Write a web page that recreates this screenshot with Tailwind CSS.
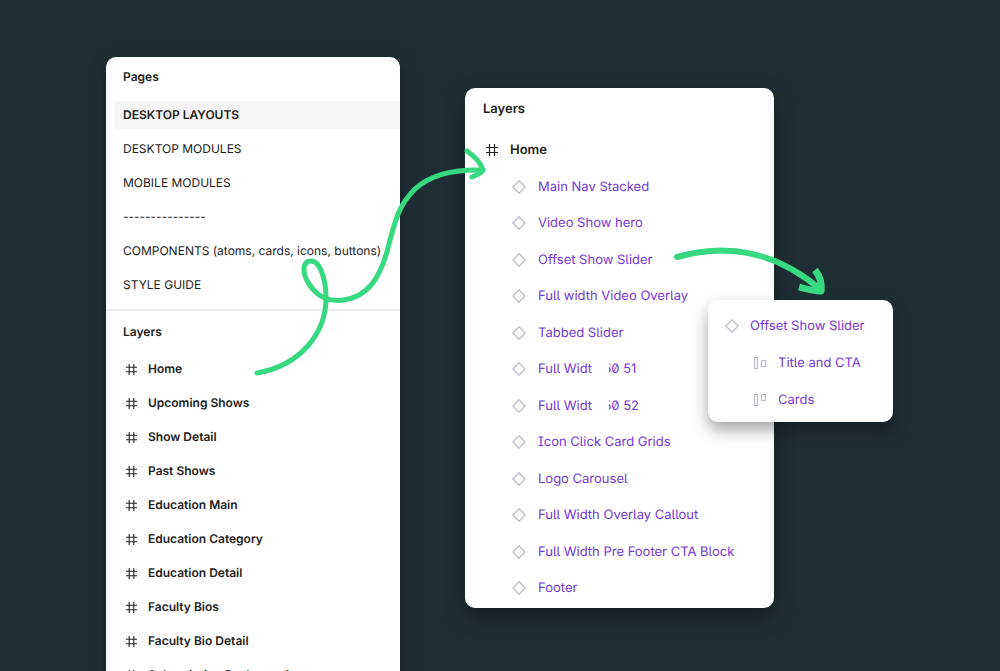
<!DOCTYPE html>
<html lang="en">
<head>
  <meta charset="UTF-8">
  <title>Pages and Layers</title>
  <meta name="viewport" content="width=device-width, initial-scale=1.0">
  <script src="https://cdn.jsdelivr.net/npm/@tailwindcss/browser@4"></script>
</head>
<body class="bg-[#1e2f34] font-['Inter',sans-serif] text-[#222] [text-rendering:geometricPrecision]">

  <!-- Shared icons -->
  <svg class="hidden">
    <symbol id="frame" viewBox="0 0 12 12">
      <path d="M3.5 0v12M8.5 0v12M0 3.5h12M0 8.5h12" fill="none" stroke="currentColor" stroke-width="1.2"/>
    </symbol>
    <symbol id="diamond" viewBox="0 0 14 14">
      <path d="M7 0.8L13.2 7L7 13.2L0.8 7Z" fill="none" stroke="currentColor" stroke-width="1.3"/>
    </symbol>
    <symbol id="align-center" viewBox="0 0 14 14">
      <path d="M1.5 1.5h3v11h-3zM8.5 4.5h4v6h-4z" fill="none" stroke="currentColor" stroke-width="1.2" stroke-linejoin="round"/>
    </symbol>
    <symbol id="align-top" viewBox="0 0 14 14">
      <path d="M1.5 1.5h3v11h-3zM8.5 1.5h4v6h-4z" fill="none" stroke="currentColor" stroke-width="1.2" stroke-linejoin="round"/>
    </symbol>
  </svg>

  <main class="flex h-screen items-start gap-[65px] overflow-hidden pl-[106px]">

    <!-- Pages panel -->
    <section class="relative z-10 mt-[57px] w-[294px] shrink-0 rounded-t-[10px] bg-white pb-4 text-xs shadow-[0_6px_16px_rgba(0,0,0,0.35)]">
      <h2 class="px-[17px] pt-3 pb-4 leading-4 font-semibold">Pages</h2>
      <ul class="pl-2">
        <li class="flex h-[28px] items-center rounded-l bg-[#f5f5f5] px-[9px] font-semibold">DESKTOP LAYOUTS</li>
        <li class="mt-[3px] flex h-[34px] items-center px-[9px]">DESKTOP MODULES</li>
        <li class="flex h-[34px] items-center px-[9px]">MOBILE MODULES</li>
        <li class="flex h-[34px] items-center px-[9px]">---------------</li>
        <li class="flex h-[34px] items-center px-[9px]">COMPONENTS (atoms, cards, icons, buttons)</li>
        <li class="flex h-[34px] items-center px-[9px]">STYLE GUIDE</li>
      </ul>

      <div class="mt-[7px] border-t-2 border-[#eeeeee] px-[17px] pt-[13px] font-semibold">
        <h2 class="leading-4">Layers</h2>
        <ul class="mt-3">
          <li class="flex h-[34px] items-center gap-[11px] pl-[3px]"><svg class="size-[11px]"><use href="#frame"/></svg>Home</li>
          <li class="flex h-[34px] items-center gap-[11px] pl-[3px]"><svg class="size-[11px]"><use href="#frame"/></svg>Upcoming Shows</li>
          <li class="flex h-[34px] items-center gap-[11px] pl-[3px]"><svg class="size-[11px]"><use href="#frame"/></svg>Show Detail</li>
          <li class="flex h-[34px] items-center gap-[11px] pl-[3px]"><svg class="size-[11px]"><use href="#frame"/></svg>Past Shows</li>
          <li class="flex h-[34px] items-center gap-[11px] pl-[3px]"><svg class="size-[11px]"><use href="#frame"/></svg>Education Main</li>
          <li class="flex h-[34px] items-center gap-[11px] pl-[3px]"><svg class="size-[11px]"><use href="#frame"/></svg>Education Category</li>
          <li class="flex h-[34px] items-center gap-[11px] pl-[3px]"><svg class="size-[11px]"><use href="#frame"/></svg>Education Detail</li>
          <li class="flex h-[34px] items-center gap-[11px] pl-[3px]"><svg class="size-[11px]"><use href="#frame"/></svg>Faculty Bios</li>
          <li class="flex h-[34px] items-center gap-[11px] pl-[3px]"><svg class="size-[11px]"><use href="#frame"/></svg>Faculty Bio Detail</li>
          <li class="flex h-[34px] items-center gap-[11px] pl-[3px]"><svg class="size-[11px]"><use href="#frame"/></svg>Subscription Packages 1</li>
        </ul>
      </div>

      <!-- Arrow from the Home page to its layers -->
      <svg class="absolute top-[83px] left-[144px] h-[250px] w-[250px] overflow-visible" viewBox="250 140 250 250" fill="none" stroke="#36d980" stroke-linecap="round" stroke-linejoin="round">
        <path d="M257 373C302 365 326 332 326 298C326 282 321 261 311 261C301 261 303 275 309 284C318 298 331 302 343 300C368 297 380 278 388 248C396 216 400 204 415 189C431 174 455 169 483 170" stroke-width="5"/>
        <path d="M467 151C474 156 481 163 483 170C482 173 477 175 472 177" stroke-width="5"/>
      </svg>
    </section>

    <!-- Layers panel -->
    <section class="relative mt-[88px] flex min-h-[520px] w-[309px] shrink-0 flex-col rounded-[10px] bg-white pb-[6px] text-[13px] leading-4 text-[#7338d8] shadow-[0_8px_20px_rgba(0,0,0,0.35)]">
      <h2 class="px-[18px] pt-[13px] font-semibold text-[#222]">Layers</h2>
      <h3 class="mt-[25px] flex items-center gap-3 px-[21px] font-semibold text-[#222]"><svg class="size-[12px]"><use href="#frame"/></svg>Home</h3>
      <ul class="mt-[21px] flex flex-1 flex-col justify-between px-[47px] pb-[6px] [font-feature-settings:'ss02']">
        <li class="flex items-center gap-3"><svg class="size-[14px] text-[#bdbacb]"><use href="#diamond"/></svg>Main Nav Stacked</li>
        <li class="flex items-center gap-3"><svg class="size-[14px] text-[#bdbacb]"><use href="#diamond"/></svg>Video Show hero</li>
        <li class="flex items-center gap-3"><svg class="size-[14px] text-[#bdbacb]"><use href="#diamond"/></svg>Offset Show Slider</li>
        <li class="flex items-center gap-3"><svg class="size-[14px] text-[#bdbacb]"><use href="#diamond"/></svg>Full width Video Overlay</li>
        <li class="flex items-center gap-3"><svg class="size-[14px] text-[#bdbacb]"><use href="#diamond"/></svg>Tabbed Slider</li>
        <li class="flex items-center gap-3"><svg class="size-[14px] text-[#bdbacb]"><use href="#diamond"/></svg><span class="relative">Full Width 50 51<i class="absolute inset-y-0 left-[54px] w-[17px] bg-white"></i></span></li>
        <li class="flex items-center gap-3"><svg class="size-[14px] text-[#bdbacb]"><use href="#diamond"/></svg><span class="relative">Full Width 50 52<i class="absolute inset-y-0 left-[54px] w-[17px] bg-white"></i></span></li>
        <li class="flex items-center gap-3"><svg class="size-[14px] text-[#bdbacb]"><use href="#diamond"/></svg>Icon Click Card Grids</li>
        <li class="flex items-center gap-3"><svg class="size-[14px] text-[#bdbacb]"><use href="#diamond"/></svg>Logo Carousel</li>
        <li class="flex items-center gap-3"><svg class="size-[14px] text-[#bdbacb]"><use href="#diamond"/></svg>Full Width Overlay Callout</li>
        <li class="flex items-center gap-3 whitespace-nowrap"><svg class="size-[14px] shrink-0 text-[#bdbacb]"><use href="#diamond"/></svg>Full Width Pre Footer CTA Block</li>
        <li class="flex items-center gap-3"><svg class="size-[14px] text-[#bdbacb]"><use href="#diamond"/></svg>Footer</li>
      </ul>

      <!-- Expanded component -->
      <div class="absolute top-[212px] left-[243px] w-[185px] rounded-[10px] bg-white pt-[18px] pb-[14px] pl-[17px] shadow-[0_8px_16px_rgba(0,0,0,0.35)] [font-feature-settings:'ss02']">
        <ul class="flex flex-col gap-[21px]">
          <li class="flex items-center gap-[11px]"><svg class="size-[14px] text-[#bdbacb]"><use href="#diamond"/></svg>Offset Show Slider</li>
          <li class="flex items-center gap-[11px] pl-[28px]"><svg class="size-[14px] text-[#bdbacb]"><use href="#align-center"/></svg>Title and CTA</li>
          <li class="flex items-center gap-[11px] pl-[28px]"><svg class="size-[14px] text-[#bdbacb]"><use href="#align-top"/></svg>Cards</li>
        </ul>
      </div>

      <!-- Arrow to the expanded component -->
      <svg class="absolute top-[152px] left-[205px] h-[60px] w-[160px] overflow-visible" viewBox="670 240 160 60" fill="none" stroke="#36d980" stroke-linejoin="round">
        <path d="M677 257C726 243 776 251 821 290" stroke-width="6" stroke-linecap="round"/>
        <path d="M815 270C820 276 822 283 821 291C814 291 806 289 799 287" stroke-width="7"/>
      </svg>
    </section>

  </main>
</body>
</html>
